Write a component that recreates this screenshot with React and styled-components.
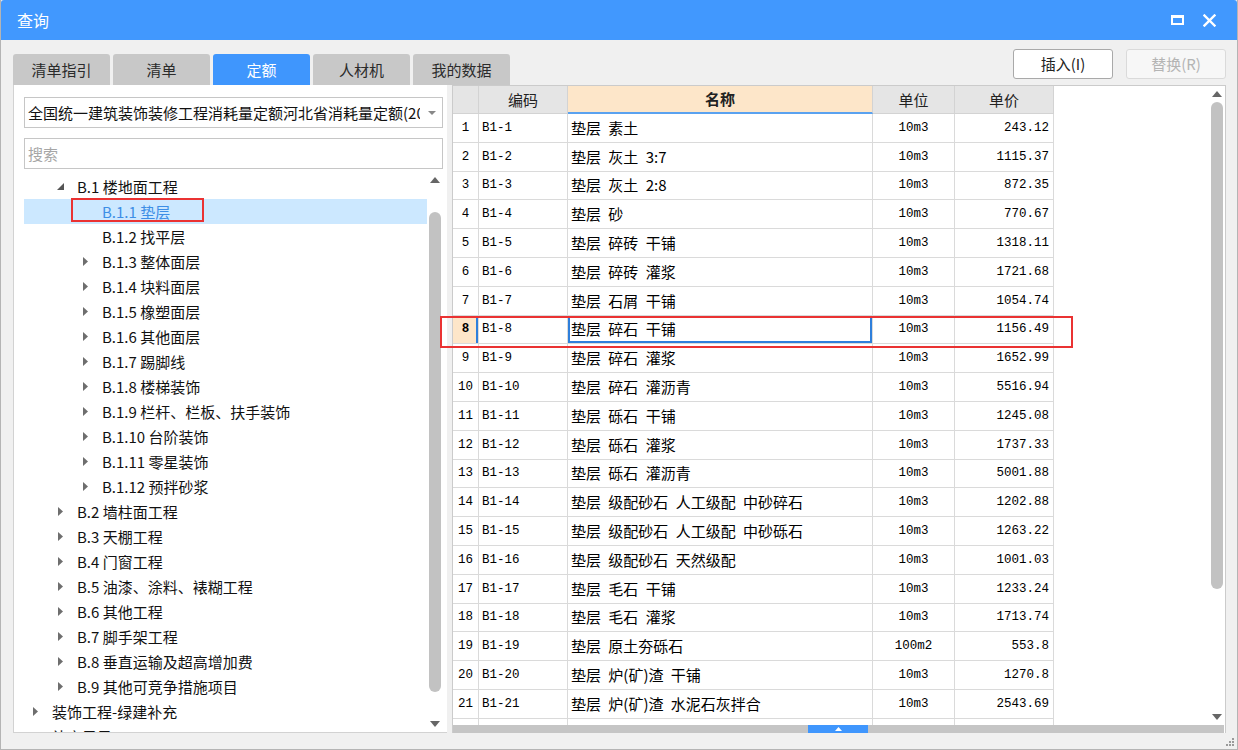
import React from 'react';
import styled, { createGlobalStyle } from 'styled-components';

const GlobalStyle = createGlobalStyle`
  html, body {
    margin: 0;
    padding: 0;
    background: #fff;
  }
  body {
    font-family: "Noto Sans CJK SC", "Noto Sans", sans-serif;
  }
  * { box-sizing: border-box; }
`;

const CN = '"Noto Sans CJK SC", "Noto Sans", sans-serif';
const MONO = '"Liberation Mono", "Noto Sans CJK SC", monospace';

const Window = styled.div`
  width: 1238px;
  height: 750px;
  border: 1px solid #b4b4b4;
  border-top: none;
  display: flex;
  flex-direction: column;
  background: #f0f0f0;
  overflow: hidden;
`;

const TitleBar = styled.div`
  height: 40px;
  background: #4198fe;
  display: flex;
  align-items: center;
  padding: 0 12px 0 16px;
  color: #fff;
  font-size: 16px;
  border-radius: 3px 3px 0 0;
`;

const Title = styled.div`
  flex: 1;
  line-height: 20px;
`;

const TitleBtn = styled.div`
  width: 32px;
  height: 24px;
  display: flex;
  align-items: center;
  justify-content: center;
`;

const MaxIcon = styled.div`
  width: 13px;
  height: 10px;
  border: 2px solid #fff;
  border-top-width: 3px;
`;

const TopRow = styled.div`
  height: 45px;
  display: flex;
  padding: 0 11px 0 12px;
`;

const Tabs = styled.div`
  display: flex;
  gap: 3px;
  align-self: flex-end;
  flex: 1;
`;

const Tab = styled.div`
  width: 97px;
  height: 31px;
  border-radius: 3px 3px 0 0;
  background: ${p => (p.$active ? '#3f96fd' : '#c8c8c8')};
  color: ${p => (p.$active ? '#fff' : '#2b2b2b')};
  font-size: 15px;
  display: flex;
  align-items: center;
  justify-content: center;
  line-height: 20px;
`;

const Buttons = styled.div`
  display: flex;
  gap: 13px;
  margin-top: 9px;
`;

const Btn = styled.div`
  width: 100px;
  height: 30px;
  border-radius: 3px;
  border: 1px solid ${p => (p.$disabled ? '#dadada' : '#a9a9a9')};
  background: ${p => (p.$disabled ? '#f7f7f7' : '#fff')};
  color: ${p => (p.$disabled ? '#b4b4b4' : '#222')};
  font-size: 15px;
  display: flex;
  align-items: center;
  justify-content: center;
  line-height: 20px;
`;

const Main = styled.div`
  position: relative;
  height: 648px;
  display: flex;
  gap: 5px;
  margin: 0 11px 0 12px;
`;

const LeftPanel = styled.div`
  width: 434px;
  background: #fff;
  border-left: 1px solid #d2d2d2;
  border-bottom: 1px solid #d2d2d2;
  padding: 12px 4px 0 10px;
  display: flex;
  flex-direction: column;
`;

const Select = styled.div`
  height: 31px;
  border: 1px solid #c6c6c6;
  display: flex;
  align-items: center;
  padding: 0 6px 0 3px;
  font-size: 15px;
  color: #111;
  overflow: hidden;
  white-space: nowrap;
`;

const SelectText = styled.div`
  flex: 1;
  overflow: hidden;
  line-height: 20px;
`;

const Caret = styled.div`
  width: 0;
  height: 0;
  border-left: 4px solid transparent;
  border-right: 4px solid transparent;
  border-top: 4px solid #888;
  margin-left: 8px;
`;

const Search = styled.div`
  height: 31px;
  margin-top: 10px;
  border: 1px solid #c6c6c6;
  display: flex;
  align-items: center;
  padding-left: 3px;
  font-size: 15px;
  color: #a6a6a6;
  line-height: 20px;
`;

const TreeWrap = styled.div`
  flex: 1;
  margin-top: 3px;
  display: flex;
  overflow: hidden;
`;

const TreeList = styled.div`
  flex: 1;
  padding-top: 2px;
  overflow: hidden;
`;

const TreeRow = styled.div`
  height: 25px;
  display: flex;
  align-items: center;
  padding-left: ${p => 3 + 25 * (p.$level - 1)}px;
  background: ${p => (p.$selected ? '#cce8ff' : 'transparent')};
  color: ${p => (p.$selected ? '#3d8ee6' : '#111')};
  font-size: 15px;
  white-space: nowrap;
`;

const Toggle = styled.div`
  width: 17px;
  height: 25px;
  margin-right: 8px;
  display: flex;
  align-items: center;
  justify-content: center;
`;

const TreeLabel = styled.span`
  line-height: 20px;
`;

const ScrollV = styled.div`
  width: ${p => p.$w}px;
  display: flex;
  flex-direction: column;
  align-items: center;
  background: #fff;
`;

const ArrowBox = styled.div`
  height: 16px;
  width: 100%;
  display: flex;
  align-items: center;
  justify-content: center;
`;

const Thumb = styled.div`
  width: 12px;
  border-radius: 6px;
  background: #c2c2c2;
`;

const Spacer = styled.div`
  flex: 1;
`;

const RightPanel = styled.div`
  flex: 1;
  background: #fff;
  border: 1px solid #cbcbcb;
  border-bottom: none;
  display: flex;
  flex-direction: column;
`;

const GridArea = styled.div`
  flex: 1;
  display: flex;
  overflow: hidden;
`;

const Table = styled.div`
  flex: 1;
  overflow: hidden;
`;

const Row = styled.div`
  display: flex;
  height: ${p => (p.$head ? 28 : 28.8)}px;
`;

const Cell = styled.div`
  width: ${p => p.$w}px;
  flex: none;
  display: flex;
  align-items: center;
  justify-content: ${p => p.$align || 'flex-start'};
  padding: 0 ${p => (p.$align === 'flex-end' ? 4 : 3)}px;
  border-right: 1px solid #dadada;
  border-bottom: 1px solid #dadada;
  font-family: ${p => (p.$cn ? CN : MONO)};
  font-size: ${p => (p.$cn ? 15 : 12.5)}px;
  font-weight: ${p => (p.$bold ? 700 : 400)};
  word-spacing: ${p => (p.$cn ? 4 : 0)}px;
  color: #000;
  white-space: nowrap;
  overflow: hidden;
  line-height: 20px;
  background: ${p => p.$bg || '#fff'};
`;

const HeadCell = styled(Cell)`
  justify-content: center;
  font-family: ${CN};
  font-size: 15px;
  color: #222;
  background: ${p => (p.$active ? '#fde6c9' : '#e5e5e5')};
  border-right: 1px solid #d3d3d3;
  border-bottom: ${p => (p.$active ? '2px solid #5aa2f0' : '1px solid #d3d3d3')};
`;

const FocusCell = styled(Cell)`
  box-shadow: inset 0 0 0 2px #2e7fdb;
`;

const HScroll = styled.div`
  height: 8px;
  background: #c5c5c5;
  margin-right: 1px;
  display: flex;
`;

const HThumb = styled.div`
  margin-left: 355px;
  width: 60px;
  background: #3f96fd;
  display: flex;
  align-items: center;
  justify-content: center;
`;

const Footer = styled.div`
  flex: 1;
  display: flex;
  justify-content: flex-end;
  align-items: flex-end;
  padding: 0 2px 2px 0;
`;

const Mark = styled.div`
  position: absolute;
  border: 2px solid #ea3232;
  pointer-events: none;
`;

const Up = ({ c = '#666' }) => (
  <svg width="10" height="6" viewBox="0 0 10 6"><path d="M0 6 L5 0 L10 6 Z" fill={c} /></svg>
);
const Down = ({ c = '#666' }) => (
  <svg width="10" height="6" viewBox="0 0 10 6"><path d="M0 0 L5 6 L10 0 Z" fill={c} /></svg>
);
const Collapsed = () => (
  <svg width="5" height="9" viewBox="0 0 5 9"><path d="M0 0 L5 4.5 L0 9 Z" fill="#6e6e6e" /></svg>
);
const Expanded = () => (
  <svg width="7" height="7" viewBox="0 0 7 7"><path d="M7 0 L7 7 L0 7 Z" fill="#555" /></svg>
);
const Close = () => (
  <svg width="13" height="13" viewBox="0 0 13 13">
    <path d="M1.5 1.5 L11.5 11.5 M11.5 1.5 L1.5 11.5" stroke="#fff" strokeWidth="2.4" strokeLinecap="square" />
  </svg>
);
const Grip = () => (
  <svg width="10" height="10" viewBox="0 0 10 10" fill="#9a9a9a">
    <rect x="7" y="1" width="2" height="2" />
    <rect x="4" y="4" width="2" height="2" />
    <rect x="7" y="4" width="2" height="2" />
    <rect x="1" y="7" width="2" height="2" />
    <rect x="4" y="7" width="2" height="2" />
    <rect x="7" y="7" width="2" height="2" />
  </svg>
);

const TREE = [
  { level: 2, label: 'B.1 楼地面工程', open: true },
  { level: 3, label: 'B.1.1 垫层', leaf: true, selected: true },
  { level: 3, label: 'B.1.2 找平层', leaf: true },
  { level: 3, label: 'B.1.3 整体面层' },
  { level: 3, label: 'B.1.4 块料面层' },
  { level: 3, label: 'B.1.5 橡塑面层' },
  { level: 3, label: 'B.1.6 其他面层' },
  { level: 3, label: 'B.1.7 踢脚线' },
  { level: 3, label: 'B.1.8 楼梯装饰' },
  { level: 3, label: 'B.1.9 栏杆、栏板、扶手装饰' },
  { level: 3, label: 'B.1.10 台阶装饰' },
  { level: 3, label: 'B.1.11 零星装饰' },
  { level: 3, label: 'B.1.12 预拌砂浆' },
  { level: 2, label: 'B.2 墙柱面工程' },
  { level: 2, label: 'B.3 天棚工程' },
  { level: 2, label: 'B.4 门窗工程' },
  { level: 2, label: 'B.5 油漆、涂料、裱糊工程' },
  { level: 2, label: 'B.6 其他工程' },
  { level: 2, label: 'B.7 脚手架工程' },
  { level: 2, label: 'B.8 垂直运输及超高增加费' },
  { level: 2, label: 'B.9 其他可竞争措施项目' },
  { level: 1, label: '装饰工程-绿建补充' },
  { level: 1, label: '补充子目', leaf: true },
];

const ROWS = [
  ['B1-1', '垫层 素土', '10m3', '243.12'],
  ['B1-2', '垫层 灰土 3:7', '10m3', '1115.37'],
  ['B1-3', '垫层 灰土 2:8', '10m3', '872.35'],
  ['B1-4', '垫层 砂', '10m3', '770.67'],
  ['B1-5', '垫层 碎砖 干铺', '10m3', '1318.11'],
  ['B1-6', '垫层 碎砖 灌浆', '10m3', '1721.68'],
  ['B1-7', '垫层 石屑 干铺', '10m3', '1054.74'],
  ['B1-8', '垫层 碎石 干铺', '10m3', '1156.49'],
  ['B1-9', '垫层 碎石 灌浆', '10m3', '1652.99'],
  ['B1-10', '垫层 碎石 灌沥青', '10m3', '5516.94'],
  ['B1-11', '垫层 砾石 干铺', '10m3', '1245.08'],
  ['B1-12', '垫层 砾石 灌浆', '10m3', '1737.33'],
  ['B1-13', '垫层 砾石 灌沥青', '10m3', '5001.88'],
  ['B1-14', '垫层 级配砂石 人工级配 中砂碎石', '10m3', '1202.88'],
  ['B1-15', '垫层 级配砂石 人工级配 中砂砾石', '10m3', '1263.22'],
  ['B1-16', '垫层 级配砂石 天然级配', '10m3', '1001.03'],
  ['B1-17', '垫层 毛石 干铺', '10m3', '1233.24'],
  ['B1-18', '垫层 毛石 灌浆', '10m3', '1713.74'],
  ['B1-19', '垫层 原土夯砾石', '100m2', '553.8'],
  ['B1-20', '垫层 炉(矿)渣 干铺', '10m3', '1270.8'],
  ['B1-21', '垫层 炉(矿)渣 水泥石灰拌合', '10m3', '2543.69'],
  ['', '', '', ''],
];

const COLS = [26, 89, 305, 82, 99];
const CURRENT = 8;

function Scrollbar({ width, thumbTop, thumbHeight }) {
  return (
    <ScrollV $w={width}>
      <ArrowBox><Up /></ArrowBox>
      <Thumb style={{ marginTop: thumbTop, height: thumbHeight }} />
      <Spacer />
      <ArrowBox><Down /></ArrowBox>
    </ScrollV>
  );
}

export default function App() {
  return (
    <>
      <GlobalStyle />
      <Window>
        <TitleBar>
          <Title>查询</Title>
          <TitleBtn><MaxIcon /></TitleBtn>
          <TitleBtn><Close /></TitleBtn>
        </TitleBar>

        <TopRow>
          <Tabs>
            {['清单指引', '清单', '定额', '人材机', '我的数据'].map(t => (
              <Tab key={t} $active={t === '定额'}>{t}</Tab>
            ))}
          </Tabs>
          <Buttons>
            <Btn>插入(I)</Btn>
            <Btn $disabled>替换(R)</Btn>
          </Buttons>
        </TopRow>

        <Main>
          <LeftPanel>
            <Select>
              <SelectText>全国统一建筑装饰装修工程消耗量定额河北省消耗量定额(2012)</SelectText>
              <Caret />
            </Select>
            <Search>搜索</Search>
            <TreeWrap>
              <TreeList>
                {TREE.map(n => (
                  <TreeRow key={n.label} $level={n.level} $selected={n.selected}>
                    <Toggle>{n.leaf ? null : n.open ? <Expanded /> : <Collapsed />}</Toggle>
                    <TreeLabel>{n.label}</TreeLabel>
                  </TreeRow>
                ))}
              </TreeList>
              <Scrollbar width={16} thumbTop={24} thumbHeight={480} />
            </TreeWrap>
          </LeftPanel>

          <RightPanel>
            <GridArea>
              <Table>
                <Row $head>
                  <HeadCell $w={COLS[0]} />
                  <HeadCell $w={COLS[1]}>编码</HeadCell>
                  <HeadCell $w={COLS[2]} $active $bold>名称</HeadCell>
                  <HeadCell $w={COLS[3]}>单位</HeadCell>
                  <HeadCell $w={COLS[4]}>单价</HeadCell>
                </Row>
                {ROWS.map((r, i) => {
                  const cur = i + 1 === CURRENT;
                  const NameCell = cur ? FocusCell : Cell;
                  return (
                    <Row key={i}>
                      <Cell $w={COLS[0]} $align="center" $bg={cur ? '#fde6c9' : undefined} $bold={cur}
                        style={cur ? { boxShadow: 'inset -2px 0 0 #2e7fdb' } : undefined}>
                        {r[0] ? i + 1 : ''}
                      </Cell>
                      <Cell $w={COLS[1]}>{r[0]}</Cell>
                      <NameCell $w={COLS[2]} $cn>{r[1]}</NameCell>
                      <Cell $w={COLS[3]} $align="center">{r[2]}</Cell>
                      <Cell $w={COLS[4]} $align="flex-end">{r[3]}</Cell>
                    </Row>
                  );
                })}
              </Table>
              <Scrollbar width={17} thumbTop={0} thumbHeight={487} />
            </GridArea>
            <HScroll>
              <HThumb>
                <svg width="7" height="4" viewBox="0 0 7 4"><path d="M0 4 L3.5 0 L7 4 Z" fill="#fff" /></svg>
              </HThumb>
            </HScroll>
          </RightPanel>

          <Mark style={{ left: 58, top: 113, width: 133, height: 24 }} />
          <Mark style={{ left: 427, top: 231, width: 633, height: 32 }} />
        </Main>

        <Footer><Grip /></Footer>
      </Window>
    </>
  );
}
